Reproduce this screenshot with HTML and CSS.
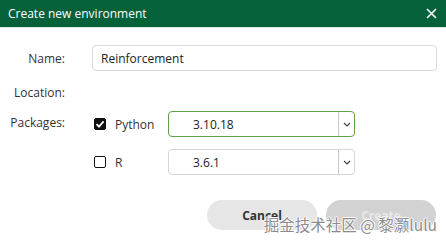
FILE: index.html
```html
<!DOCTYPE html>
<html lang="en">
<head>
    <meta charset="UTF-8">
    <meta name="viewport" content="width=device-width, initial-scale=1.0">
    <title>Create new environment</title>
    <link rel="stylesheet" href="styles.css">
</head>
<body>
    <div class="dialog">
        <div class="titlebar">
            <span class="title">Create new environment</span>
            <svg class="close" width="11" height="11" viewBox="0 0 11 11">
                <path d="M1 1L10 10M10 1L1 10" stroke="#fff" stroke-width="1.6" fill="none"/>
            </svg>
        </div>

        <div class="form">
            <label class="label name-label">Name:</label>
            <input class="text-input" type="text" value="Reinforcement">

            <label class="label loc-label">Location:</label>
            <div class="loc-value"></div>

            <label class="label pkg-label">Packages:</label>
            <div class="packages">
                <div class="pkg-row">
                    <span class="check checked">
                        <svg width="10" height="10" viewBox="0 0 10 10">
                            <path d="M1.5 5.2L4 7.6L8.6 2.4" stroke="#fff" stroke-width="1.8" fill="none"/>
                        </svg>
                    </span>
                    <span class="pkg-name">Python</span>
                    <div class="select active">
                        <span class="select-value">3.10.18</span>
                        <span class="select-arrow">
                            <svg width="8" height="5" viewBox="0 0 8 5"><path d="M1 1L4 4L7 1" stroke="#444" stroke-width="1.2" fill="none"/></svg>
                        </span>
                    </div>
                </div>
                <div class="pkg-row">
                    <span class="check"></span>
                    <span class="pkg-name">R</span>
                    <div class="select">
                        <span class="select-value">3.6.1</span>
                        <span class="select-arrow">
                            <svg width="8" height="5" viewBox="0 0 8 5"><path d="M1 1L4 4L7 1" stroke="#444" stroke-width="1.2" fill="none"/></svg>
                        </span>
                    </div>
                </div>
            </div>
        </div>

        <div class="actions">
            <button class="btn cancel">Cancel</button>
            <button class="btn create" disabled>Create</button>
        </div>

        <!-- 水印 -->
        <div class="watermark">掘金技术社区 @ 黎灏lulu</div>
    </div>
</body>
</html>
```

FILE: styles.css
```css
* {
    margin: 0;
    padding: 0;
    box-sizing: border-box;
}
body {
    font-family: "Open Sans", "Noto Sans", sans-serif;
    font-size: 12px;
    color: #333;
    background: #fff;
}
.dialog {
    position: relative;
    width: 446px;
    height: 245px;
    overflow: hidden;
}
.titlebar {
    height: 28px;
    background-color: #04613a;
    border-bottom: 1px solid #dce8e1;
    display: flex;
    justify-content: space-between;
    align-items: center;
    padding: 0 9px 1px 8px;
}
.title {
    color: #fff;
    font-size: 12px;
}
.close {
    display: block;
}
.form {
    display: grid;
    grid-template-columns: 57px 1fr;
    column-gap: 27px;
    padding: 17px 9px 0 8px;
}
.label {
    text-align: right;
    color: #333;
}
.name-label {
    align-self: center;
}
.text-input {
    height: 26px;
    border: 1px solid #d9d9d9;
    border-radius: 4px;
    padding: 0 8px;
    font-family: inherit;
    font-size: 12px;
    color: #222;
    outline: none;
}
.loc-label {
    margin-top: 13px;
    line-height: 17px;
}
.loc-value {
    height: 17px;
    margin-top: 13px;
}
.pkg-label {
    margin-top: 13px;
    line-height: 17px;
}
.packages {
    margin-top: 10px;
    display: flex;
    flex-direction: column;
    gap: 12px;
}
.pkg-row {
    display: flex;
    align-items: center;
}
.check {
    width: 12px;
    height: 12px;
    border: 1.5px solid #111;
    border-radius: 2px;
    margin-left: 2px;
    display: flex;
    align-items: center;
    justify-content: center;
}
.check.checked {
    background-color: #111;
}
.pkg-name {
    width: 62px;
    padding-left: 9px;
    color: #333;
}
.select {
    width: 187px;
    height: 26px;
    border: 1px solid #d6d6d6;
    border-radius: 4px;
    display: flex;
    align-items: center;
}
.select.active {
    border-color: #5fa144;
}
.select-value {
    flex: 1;
    padding-left: 24px;
    color: #222;
}
.select-arrow {
    width: 16px;
    height: 100%;
    border-left: 1px solid #c8c8c8;
    display: flex;
    align-items: center;
    justify-content: center;
}
.actions {
    display: flex;
    justify-content: flex-end;
    gap: 9px;
    padding: 25px 10px 0 0;
}
.btn {
    width: 110px;
    height: 30px;
    border: none;
    border-radius: 15px;
    font-family: inherit;
    font-size: 12px;
    font-weight: bold;
}
.btn.cancel {
    background-color: #e6e6e6;
    color: #333;
}
.btn.create {
    background-color: #d2d2d2;
    color: #e9e9e9;
}
.watermark {
    position: absolute;
    right: 9px;
    top: 213px;
    font-family: "Noto Sans CJK SC", sans-serif;
    font-size: 15.5px;
    color: #8c8c8c;
    white-space: nowrap;
    text-shadow: 1px 0 #fff, -1px 0 #fff, 0 1px #fff, 0 -1px #fff;
}
```
